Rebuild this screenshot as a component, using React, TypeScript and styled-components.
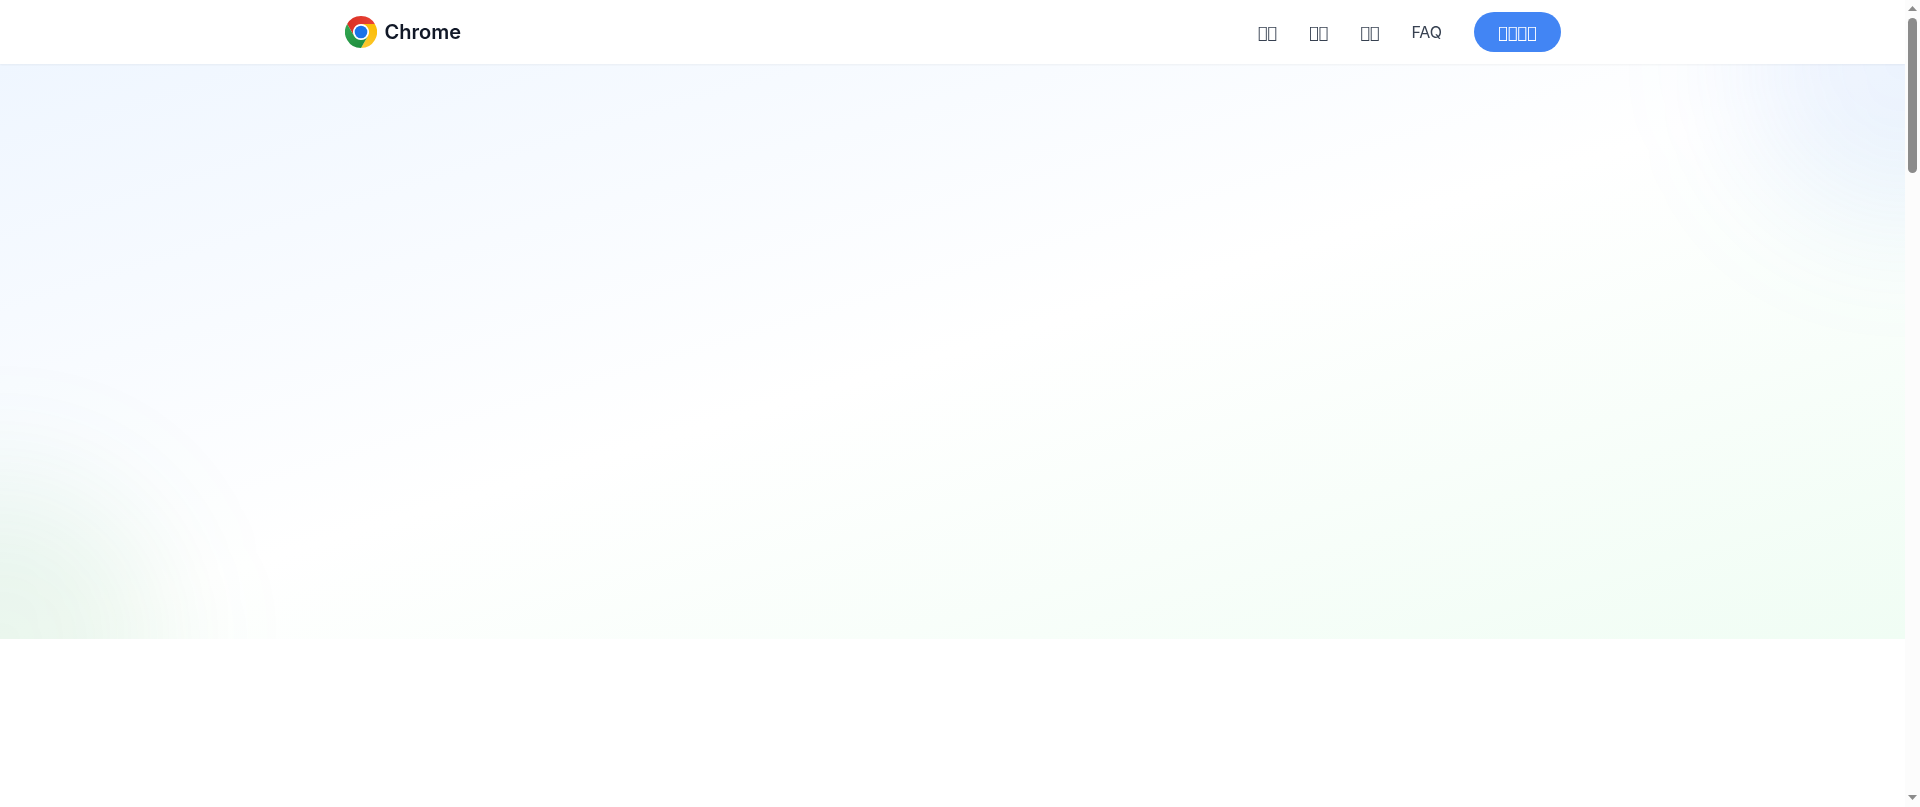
import styled, { createGlobalStyle } from "styled-components";

const GlobalStyle = createGlobalStyle`
  *, *::before, *::after { box-sizing: border-box; }
  body {
    margin: 0;
    background: #fff;
    color: #111827;
    font-family: Inter, sans-serif;
    font-size: 16px;
    line-height: 24px;
    overflow: hidden;
  }
`;

const Viewport = styled.div`
  display: grid;
  grid-template-columns: minmax(0, 1fr) 15px;
  height: 100vh;
`;

const Page = styled.div`
  overflow: hidden;
`;

const Header = styled.header`
  position: relative;
  z-index: 1;
  background: rgba(255, 255, 255, 0.95);
  backdrop-filter: blur(8px);
  box-shadow: 0 1px 2px rgba(0, 0, 0, 0.05);
`;

const HeaderInner = styled.div`
  display: flex;
  align-items: center;
  justify-content: space-between;
  max-width: 1280px;
  height: 64px;
  margin: 0 auto;
  padding: 0 32px;
`;

const Brand = styled.a`
  display: flex;
  align-items: center;
  gap: 8px;
  color: #111827;
  font-size: 20px;
  font-weight: 600;
  line-height: 28px;
  text-decoration: none;
`;

const Nav = styled.nav`
  display: flex;
  align-items: center;
  gap: 32px;
`;

const NavLink = styled.a`
  color: #374151;
  text-decoration: none;
`;

/* Characters without a glyph, shown with the font's own empty box. */
const BoxText = styled.span`
  font-family: "DejaVu Sans", sans-serif;
  line-height: 16px;
`;

const DownloadButton = styled.button`
  padding: 8px 24px;
  border: 0;
  border-radius: 9999px;
  background: #4285f4;
  color: #fff;
  font: inherit;
  cursor: pointer;
`;

const Hero = styled.section`
  position: relative;
  height: 575px;
  overflow: hidden;
  background: linear-gradient(to bottom right, #eff6ff, #fff, #f0fdf4);
`;

const Glow = styled.div<{ $corner: "top" | "bottom" }>`
  position: absolute;
  width: 320px;
  height: 320px;
  border-radius: 50%;
  filter: blur(64px);
  ${({ $corner }) =>
    $corner === "top"
      ? "top: -160px; right: -160px; background: rgba(66, 133, 244, 0.1);"
      : "bottom: -160px; left: -160px; background: rgba(52, 168, 83, 0.1);"}
`;

const ScrollTrack = styled.div`
  display: flex;
  flex-direction: column;
  align-items: center;
  justify-content: space-between;
  padding: 6px 0 7px;
  background: #fcfcfc;
`;

const ScrollTop = styled.div`
  display: flex;
  flex-direction: column;
  align-items: center;
  gap: 7px;
`;

const ScrollThumb = styled.div`
  width: 9px;
  height: 155px;
  border-radius: 5px;
  background: #8b8b8b;
`;

const Arrow = styled.svg`
  display: block;
  width: 9px;
  height: 5px;
  fill: #8b8b8b;
`;

const ChromeLogo = () => (
  <svg width="32" height="32" viewBox="0 0 48 48" aria-hidden="true">
    <defs>
      <linearGradient id="red" x1="3.2" y1="15" x2="44.8" y2="15" gradientUnits="userSpaceOnUse">
        <stop offset="0" stopColor="#d93025" />
        <stop offset="1" stopColor="#ea4335" />
      </linearGradient>
      <linearGradient id="yellow" x1="20.7" y1="47.7" x2="41.5" y2="11.7" gradientUnits="userSpaceOnUse">
        <stop offset="0" stopColor="#fcc934" />
        <stop offset="1" stopColor="#fbbc04" />
      </linearGradient>
      <linearGradient id="green" x1="26.6" y1="46.5" x2="5.8" y2="10.5" gradientUnits="userSpaceOnUse">
        <stop offset="0" stopColor="#1e8e3e" />
        <stop offset="1" stopColor="#34a853" />
      </linearGradient>
    </defs>
    <circle cx="24" cy="23.995" r="12" fill="#fff" />
    <path d="M24 12h20.781A23.994 23.994 0 0 0 3.216 12.003L13.606 30l.01-.002A11.985 11.985 0 0 1 24 12Z" fill="url(#red)" />
    <circle cx="24" cy="24" r="9.5" fill="#1a73e8" />
    <path d="M34.391 30.003 24.001 48A23.994 23.994 0 0 0 44.78 12.003H23.999l-.003.009a11.985 11.985 0 0 1 10.395 17.991Z" fill="url(#yellow)" />
    <path d="M13.609 30.003 3.218 12.006A23.994 23.994 0 0 0 24.003 48l10.39-17.997-.007-.007a11.985 11.985 0 0 1-20.778.007Z" fill="url(#green)" />
  </svg>
);

const sections = ["features", "security", "download"];

export default function App() {
  return (
    <>
      <GlobalStyle />
      <Viewport>
        <Page>
          <Header>
            <HeaderInner>
              <Brand href="#">
                <ChromeLogo />
                Chrome
              </Brand>
              <Nav>
                {sections.map((section) => (
                  <NavLink key={section} href={`#${section}`}>
                    <BoxText>{"\ue123\ue123"}</BoxText>
                  </NavLink>
                ))}
                <NavLink href="#faq">FAQ</NavLink>
                <DownloadButton type="button">
                  <BoxText>{"\ue123\ue123\ue123\ue123"}</BoxText>
                </DownloadButton>
              </Nav>
            </HeaderInner>
          </Header>
          <main>
            <Hero>
              <Glow $corner="top" />
              <Glow $corner="bottom" />
            </Hero>
          </main>
        </Page>
        <ScrollTrack aria-hidden="true">
          <ScrollTop>
            <Arrow viewBox="0 0 9 5"><path d="M0 5 4.5 0 9 5Z" /></Arrow>
            <ScrollThumb />
          </ScrollTop>
          <Arrow viewBox="0 0 9 5"><path d="M0 0h9L4.5 5Z" /></Arrow>
        </ScrollTrack>
      </Viewport>
    </>
  );
}
